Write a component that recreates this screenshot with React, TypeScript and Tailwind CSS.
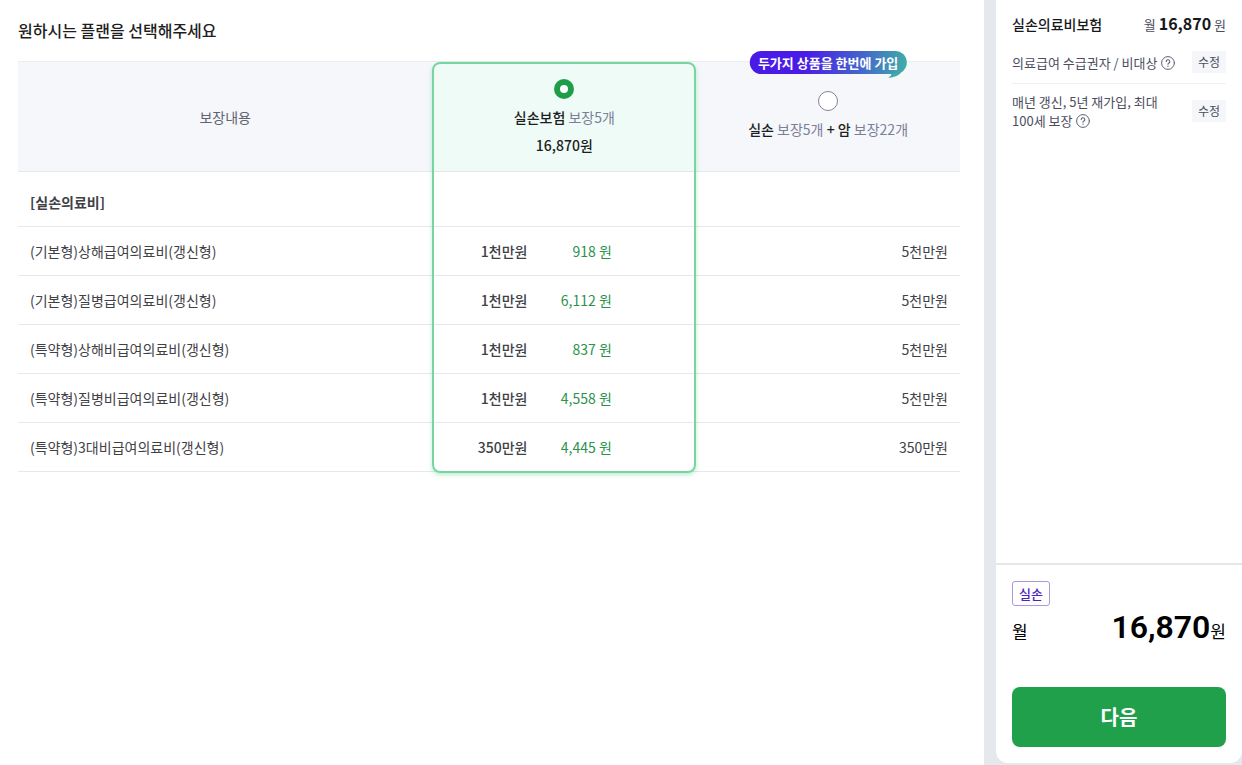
import React from "react";

type Coverage = { name: string; amount: string; price: string; bundle: string };

const coverages: Coverage[] = [
  { name: "(기본형)상해급여의료비(갱신형)", amount: "1천만원", price: "918 원", bundle: "5천만원" },
  { name: "(기본형)질병급여의료비(갱신형)", amount: "1천만원", price: "6,112 원", bundle: "5천만원" },
  { name: "(특약형)상해비급여의료비(갱신형)", amount: "1천만원", price: "837 원", bundle: "5천만원" },
  { name: "(특약형)질병비급여의료비(갱신형)", amount: "1천만원", price: "4,558 원", bundle: "5천만원" },
  { name: "(특약형)3대비급여의료비(갱신형)", amount: "350만원", price: "4,445 원", bundle: "350만원" },
];

function PlanRadio({ id, checked = false }: { id: string; checked?: boolean }) {
  return (
    <input
      type="radio"
      id={id}
      name="plan"
      defaultChecked={checked}
      className="size-5 appearance-none rounded-full border border-[#858296] bg-white checked:border-[6px] checked:border-[#1f9e4a]"
    />
  );
}

function HelpButton({ label }: { label: string }) {
  return (
    <button type="button" aria-label={label} className="ml-1 inline-block align-middle">
      <svg viewBox="0 0 14 14" className="-mt-0.5 size-3.5" fill="none" stroke="#5d6070" strokeLinecap="round" strokeLinejoin="round">
        <circle cx="7" cy="7" r="6.4" />
        <path d="M5.2 5.6a1.8 1.8 0 1 1 2.7 1.5c-.6.35-.9.6-.9 1.2" strokeWidth="1.1" />
        <path d="M7 10.1v.1" strokeWidth="1.3" />
      </svg>
    </button>
  );
}

function EditButton() {
  return (
    <button type="button" className="h-[22px] w-[34px] shrink-0 bg-[#f5f6fa] text-xs text-[#4b4e5d]">
      수정
    </button>
  );
}

function PlanTable() {
  return (
    <div className="relative mt-[19px]">
      <table className="w-full table-fixed border-separate border-spacing-0 border-t border-[#eaecef] text-sm leading-5">
        <colgroup>
          <col className="w-[44%]" />
          <col className="w-[28%]" />
          <col className="w-[28%]" />
        </colgroup>
        <thead>
          <tr className="h-[110px] bg-[#f5f7fb]">
            <th scope="col" className="border-b border-[#e5e8ec] font-normal text-[#5f6472]">
              보장내용
            </th>
            <th scope="col" className="rounded-t-lg border-b border-[#e0ebe7] bg-[#effbf6] font-medium text-[#1c1e22]">
              <label htmlFor="plan-single" className="flex flex-col items-center gap-2">
                <PlanRadio id="plan-single" checked />
                <span>
                  실손보험 <span className="font-normal text-[#7b7f98]">보장5개</span>
                </span>
                <span>16,870원</span>
              </label>
            </th>
            <th scope="col" className="relative border-b border-[#e5e8ec] pb-1 font-medium text-[#1c1e22]">
              <span className="absolute -top-[11px] left-1/2 flex h-[23px] -translate-x-1/2 items-center rounded-full bg-linear-[100deg] from-[#4a1be6] from-35% via-[#4464cc] via-70% to-[#3fb0a6] px-2 text-[13px] font-bold whitespace-nowrap text-white">
                두가지 상품을 한번에 가입
                <svg viewBox="0 0 18 12" className="absolute right-0.5 -bottom-1 h-3 w-[18px]" fill="#40aaaa">
                  <path d="M4 7.6C5.2 9 3.8 10.2 2.4 10.9 1.6 11.4 2.2 12 3.2 11.8 8 11 12 9.4 14.5 6.5L12 7Z" />
                </svg>
              </span>
              <label htmlFor="plan-bundle" className="flex flex-col items-center gap-2">
                <PlanRadio id="plan-bundle" />
                <span>
                  실손 <span className="font-normal text-[#7b7f98]">보장5개</span> + 암{" "}
                  <span className="font-normal text-[#7b7f98]">보장22개</span>
                </span>
              </label>
            </th>
          </tr>
        </thead>
        <tbody className="text-[#3f4147]">
          <tr className="h-[55px]">
            <th scope="rowgroup" className="border-b border-[#e5e8ec] px-3 pt-1.5 text-left font-bold">
              [실손의료비]
            </th>
            <td className="border-b border-[#e5e8ec]" />
            <td className="border-b border-[#e5e8ec]" />
          </tr>
          {coverages.map((row) => (
            <tr key={row.name} className="h-[49px]">
              <th scope="row" className="border-b border-[#e5e8ec] px-3 text-left font-normal">
                {row.name}
              </th>
              <td className="border-b border-[#e5e8ec]">
                <div className="grid grid-cols-[36fr_32fr_32fr] text-right">
                  <span className="font-medium">{row.amount}</span>
                  <span className="text-[#2b924c]">{row.price}</span>
                </div>
              </td>
              <td className="border-b border-[#e5e8ec] px-3 text-right">{row.bundle}</td>
            </tr>
          ))}
        </tbody>
      </table>
      <div className="pointer-events-none absolute top-px -bottom-px left-[44%] w-[28%] rounded-lg border-2 border-[#78d5a0] shadow-[0_2px_4px_rgba(60,200,120,0.35)]" />
    </div>
  );
}

function Summary() {
  return (
    <aside className="flex w-[258px] shrink-0 flex-col pb-0.5 pl-3">
      <div className="flex flex-1 flex-col rounded-b-xl bg-white text-[13px] text-[#4b4e5d]">
        <section className="flex-1 px-4 pt-[11px]">
          <div className="flex items-center justify-between leading-6">
            <h2 className="text-sm leading-6 font-medium text-[#17181c]">실손의료비보험</h2>
            <p>
              월 <strong className="text-base leading-6 font-bold text-[#17181c]">16,870</strong> 원
            </p>
          </div>
          <div className="flex items-center justify-between border-b border-[#f0f1f4] pt-3.5 pb-2.5">
            <p className="leading-[19px] break-keep">
              의료급여 수급권자 / 비대상
              <HelpButton label="의료급여 수급권자 도움말" />
            </p>
            <EditButton />
          </div>
          <div className="flex items-center justify-between pt-2">
            <p className="leading-[19px] break-keep">
              매년 갱신, 5년 재가입, 최대 100세 보장
              <HelpButton label="보장 기간 도움말" />
            </p>
            <EditButton />
          </div>
        </section>
        <section className="border-t-2 border-[#e3e6ea] p-4 text-black">
          <span className="inline-flex h-[25px] items-center rounded-[3px] border border-[#a79ae0] px-1.5 text-[13px] font-medium text-[#4a23c0]">
            실손
          </span>
          <p className="flex items-baseline justify-between text-[17px] leading-[42px]">
            <span>월</span>
            <span>
              <strong className="font-[Roboto] text-[32px] font-semibold">16,870</strong>원
            </span>
          </p>
          <button type="button" className="mt-[35px] h-[60px] w-full rounded-lg bg-[#21a04b] text-xl font-bold text-white">
            다음
          </button>
        </section>
      </div>
    </aside>
  );
}

export default function App() {
  return (
    <div className="flex min-h-screen bg-[#e5e8ec] font-['Noto_Sans_CJK_KR',sans-serif]">
      <main className="min-w-0 flex-1 bg-white pt-[18px] pr-6 pl-[18px]">
        <h1 className="text-base font-medium text-[#1c1e22]">원하시는 플랜을 선택해주세요</h1>
        <PlanTable />
      </main>
      <Summary />
    </div>
  );
}
